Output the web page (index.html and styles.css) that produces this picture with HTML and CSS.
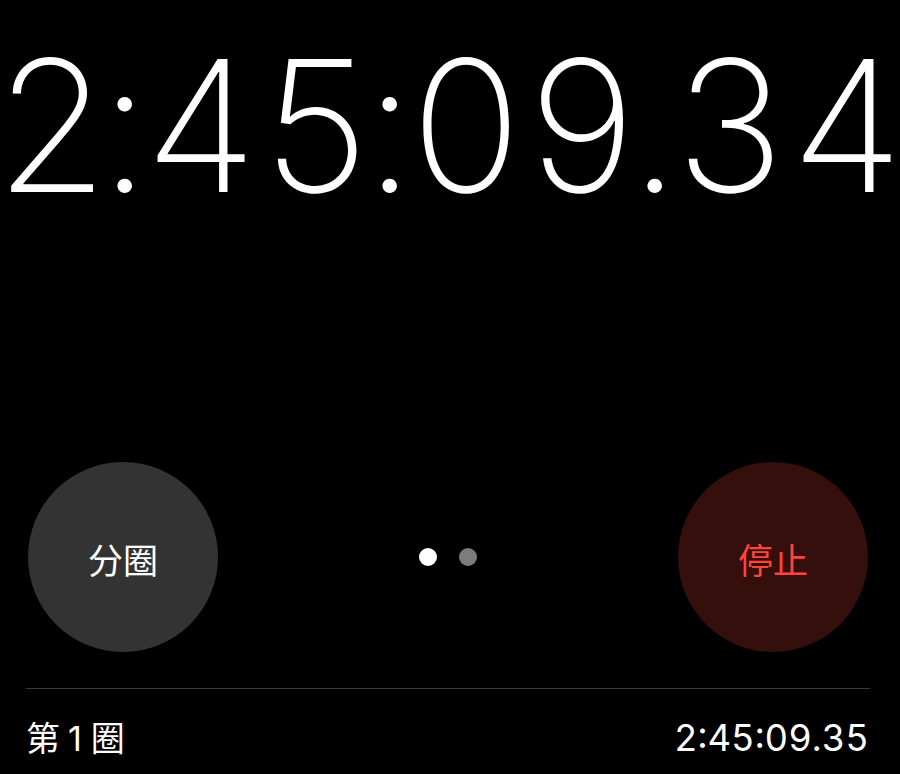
FILE: index.html
```html
<!DOCTYPE html>
<html lang="zh-CN">
<head>
<meta charset="utf-8">
<title>秒表</title>
<link rel="stylesheet" href="styles.css">
</head>
<body>
<main class="stopwatch">
  <div class="clock" aria-label="2:45:09.34"><span class="d">2</span><span class="s">:</span><span class="d">4</span><span class="d">5</span><span class="s">:</span><span class="d">0</span><span class="d">9</span><span class="s">.</span><span class="d">3</span><span class="d">4</span></div>
  <div class="controls">
    <button class="round-btn lap-btn"><span>分圈</span></button>
    <div class="pager">
      <span class="dot dot-active"></span>
      <span class="dot"></span>
    </div>
    <button class="round-btn stop-btn"><span>停止</span></button>
  </div>
  <div class="laps">
    <div class="lap-row">
      <span class="lap-name">第<span class="lap-num">1</span>圈</span>
      <span class="lap-time">2:45:09.35</span>
    </div>
  </div>
</main>
</body>
</html>
```
FILE: styles.css
```css
html, body {
  margin: 0;
  padding: 0;
  background: #000;
}
.stopwatch {
  width: 900px;
  height: 774px;
  overflow: hidden;
  background: #000;
  color: #fff;
  font-family: "Inter", "Noto Sans CJK SC", sans-serif;
}
.clock {
  display: flex;
  font-family: "Inter", sans-serif;
  font-weight: 180;
  font-size: 183px;
  line-height: 1;
  height: 462px;
  padding-top: 34px;
  box-sizing: border-box;
  margin-left: -7px;
  font-variant-numeric: tabular-nums;
  white-space: nowrap;
}
.clock .d,
.clock .s {
  flex: 0 0 auto;
  text-align: center;
}
.clock .d {
  width: 116px;
}
.clock .s {
  width: 33px;
  letter-spacing: -17px;
  text-indent: -9px;
  text-align: left;
}
.controls {
  display: flex;
  align-items: center;
  justify-content: space-between;
  padding: 0 32px 0 28px;
  height: 190px;
}
.round-btn {
  width: 190px;
  height: 190px;
  border-radius: 50%;
  border: none;
  padding: 0;
  display: flex;
  align-items: center;
  justify-content: center;
  font-family: "Noto Sans CJK SC", sans-serif;
  font-size: 35px;
  font-weight: 400;
}
.round-btn span {
  display: block;
  line-height: 1;
  padding-top: 2px;
}
.lap-btn {
  background: #333333;
  color: #ffffff;
}
.stop-btn {
  background: #340f0c;
  color: #ff443a;
}
.pager {
  display: flex;
  gap: 22px;
}
.dot {
  width: 18px;
  height: 18px;
  border-radius: 50%;
  background: #7c7c7c;
}
.dot-active {
  background: #ffffff;
}
.laps {
  margin: 36px 30px 0 26px;
  border-top: 1px solid #3a3a3a;
}
.lap-row {
  display: flex;
  justify-content: space-between;
  align-items: center;
  padding: 25px 0 0 0;
  height: 48px;
}
.lap-name {
  font-family: "Noto Sans CJK SC", sans-serif;
  font-size: 34px;
  line-height: 1;
}
.lap-num {
  font-family: "Inter", sans-serif;
  padding: 0 9px 0 8px;
}
.lap-time {
  font-family: "Inter", sans-serif;
  font-size: 36.5px;
  line-height: 1;
  margin-right: 1px;
  font-variant-numeric: tabular-nums;
}
```
